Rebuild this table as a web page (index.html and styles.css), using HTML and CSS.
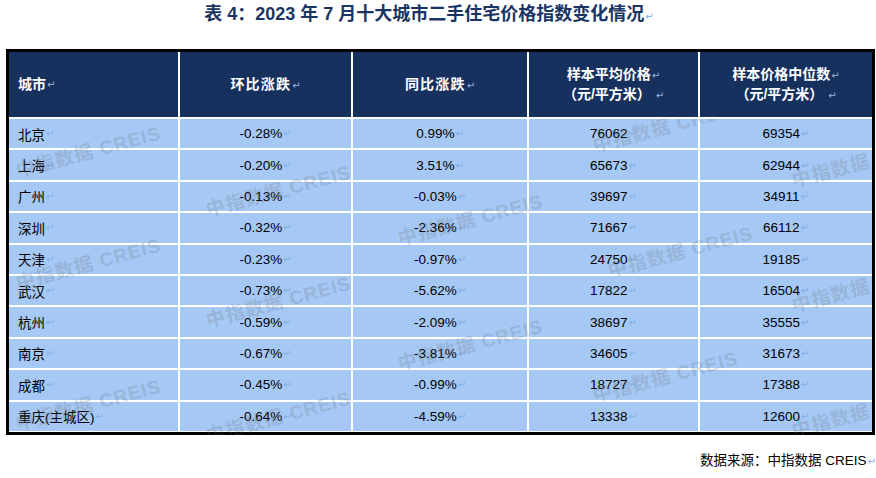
FILE: index.html
```html
<!DOCTYPE html>
<html lang="zh-CN">
<head>
<meta charset="utf-8">
<title>表 4</title>
<link rel="stylesheet" href="styles.css">
</head>
<body>
<h1 class="title">表 4：2023 年 7 月十大城市二手住宅价格指数变化情况<span class="pm">↵</span></h1>
<div class="table-wrap">
  <div class="grid">
    <div class="th left">城市<span class="pm">↵</span></div>
    <div class="th"><span class="sp">环比涨跌<span class="pm">↵</span></span></div>
    <div class="th"><span class="sp">同比涨跌<span class="pm">↵</span></span></div>
    <div class="th"><span>样本平均价格<span class="pm">↵</span></span><span>（元/平方米） <span class="pm">↵</span></span></div>
    <div class="th"><span>样本价格中位数<span class="pm">↵</span></span><span>（元/平方米） <span class="pm">↵</span></span></div>

    <div class="td left">北京<span class="pm">↵</span></div><div class="td">-0.28%<span class="pm">↵</span></div><div class="td">0.99%<span class="pm">↵</span></div><div class="td">76062<span class="pm">↵</span></div><div class="td">69354<span class="pm">↵</span></div>
    <div class="td left">上海<span class="pm">↵</span></div><div class="td">-0.20%<span class="pm">↵</span></div><div class="td">3.51%<span class="pm">↵</span></div><div class="td">65673<span class="pm">↵</span></div><div class="td">62944<span class="pm">↵</span></div>
    <div class="td left">广州<span class="pm">↵</span></div><div class="td">-0.13%<span class="pm">↵</span></div><div class="td">-0.03%<span class="pm">↵</span></div><div class="td">39697<span class="pm">↵</span></div><div class="td">34911<span class="pm">↵</span></div>
    <div class="td left">深圳<span class="pm">↵</span></div><div class="td">-0.32%<span class="pm">↵</span></div><div class="td">-2.36%<span class="pm">↵</span></div><div class="td">71667<span class="pm">↵</span></div><div class="td">66112<span class="pm">↵</span></div>
    <div class="td left">天津<span class="pm">↵</span></div><div class="td">-0.23%<span class="pm">↵</span></div><div class="td">-0.97%<span class="pm">↵</span></div><div class="td">24750<span class="pm">↵</span></div><div class="td">19185<span class="pm">↵</span></div>
    <div class="td left">武汉<span class="pm">↵</span></div><div class="td">-0.73%<span class="pm">↵</span></div><div class="td">-5.62%<span class="pm">↵</span></div><div class="td">17822<span class="pm">↵</span></div><div class="td">16504<span class="pm">↵</span></div>
    <div class="td left">杭州<span class="pm">↵</span></div><div class="td">-0.59%<span class="pm">↵</span></div><div class="td">-2.09%<span class="pm">↵</span></div><div class="td">38697<span class="pm">↵</span></div><div class="td">35555<span class="pm">↵</span></div>
    <div class="td left">南京<span class="pm">↵</span></div><div class="td">-0.67%<span class="pm">↵</span></div><div class="td">-3.81%<span class="pm">↵</span></div><div class="td">34605<span class="pm">↵</span></div><div class="td">31673<span class="pm">↵</span></div>
    <div class="td left">成都<span class="pm">↵</span></div><div class="td">-0.45%<span class="pm">↵</span></div><div class="td">-0.99%<span class="pm">↵</span></div><div class="td">18727<span class="pm">↵</span></div><div class="td">17388<span class="pm">↵</span></div>
    <div class="td left">重庆(主城区)<span class="pm">↵</span></div><div class="td">-0.64%<span class="pm">↵</span></div><div class="td">-4.59%<span class="pm">↵</span></div><div class="td">13338<span class="pm">↵</span></div><div class="td">12600<span class="pm">↵</span></div>
  </div>
  <div class="marks">
    <span class="wm w1">中指数据 CREIS</span>
    <span class="wm w2">中指数据 CREIS</span>
    <span class="wm w3">中指数据 CREIS</span>
    <span class="wm w4">中指数据 CREIS</span>
    <span class="wm w5">中指数据 CREIS</span>
    <span class="wm w6">中指数据 CREIS</span>
    <span class="wm w7">中指数据 CREIS</span>
    <span class="wm w8">中指数据 CREIS</span>
    <span class="wm w9">中指数据 CREIS</span>
    <span class="wm w10">中指数据 CREIS</span>
    <span class="wm w11">中指数据 CREIS</span>
    <span class="wm w12">中指数据 CREIS</span>
    <span class="wm w13">中指数据 CREIS</span>
    <span class="wm w14">中指数据 CREIS</span>
  </div>
</div>
<p class="source">数据来源：中指数据 CREIS<span class="pm">↵</span></p>
</body>
</html>
```
FILE: styles.css
```css
body {
  margin: 0;
  background: #fff;
  color: #000;
  font-family: "Liberation Sans", "Noto Sans CJK SC", sans-serif;
}

.title {
  margin: 0;
  height: 49px;
  padding: 4px 18px 0 0;
  box-sizing: border-box;
  text-align: center;
  font-size: 18px;
  line-height: 20px;
  font-weight: bold;
  color: #1a3563;
}

.pm {
  font-family: "DejaVu Sans", sans-serif;
  font-size: 10px;
  font-weight: normal;
  letter-spacing: 0;
  color: #86aee9;
  margin-left: 1px;
}

.th .pm {
  color: #9fb6db;
}

.table-wrap {
  position: relative;
  margin-left: 6px;
  width: 869px;
}

.grid {
  display: grid;
  grid-template-columns: 169px 171px 174px 169px 172px;
  grid-template-rows: 65px repeat(10, 29.4px);
  gap: 2px;
  border: 3px solid #000;
  padding-bottom: 1px;
  background: #fff;
}

.th {
  background: #17315f;
  color: #fff;
  font-weight: bold;
  font-size: 14px;
  line-height: 19px;
  display: flex;
  flex-direction: column;
  align-items: center;
  justify-content: center;
}

.th.left {
  flex-direction: row;
  justify-content: flex-start;
  padding-left: 9px;
}

.sp {
  letter-spacing: 1.2px;
}

.td {
  background: #a5c8f5;
  font-size: 13.5px;
  display: flex;
  align-items: center;
  justify-content: center;
}

.td.left {
  justify-content: flex-start;
  padding-left: 9px;
}

.marks {
  position: absolute;
  top: 70px;
  left: 0;
  right: 0;
  bottom: 0;
  overflow: hidden;
  pointer-events: none;
}

.wm {
  position: absolute;
  transform: translate(-50%, -50%) rotate(-15deg);
  white-space: nowrap;
  font-family: "Liberation Sans", "Noto Sans CJK SC", sans-serif;
  font-weight: bold;
  font-size: 19px;
  letter-spacing: 1px;
  color: rgba(100, 100, 100, 0.2);
}

.w1 { left: 82px; top: 31px; }
.w2 { left: 272px; top: 70px; }
.w3 { left: 464px; top: 99px; }
.w4 { left: 659px; top: 6px; }
.w5 { left: 858px; top: 41px; }
.w6 { left: 82px; top: 143px; }
.w7 { left: 272px; top: 181px; }
.w8 { left: 464px; top: 224px; }
.w9 { left: 674px; top: 131px; }
.w10 { left: 858px; top: 166px; }
.w11 { left: 82px; top: 284px; }
.w12 { left: 272px; top: 296px; }
.w13 { left: 659px; top: 256px; }
.w14 { left: 858px; top: 291px; }

.source {
  margin: 16px 0 0;
  text-align: right;
  font-size: 13.5px;
  line-height: 20px;
}
```
